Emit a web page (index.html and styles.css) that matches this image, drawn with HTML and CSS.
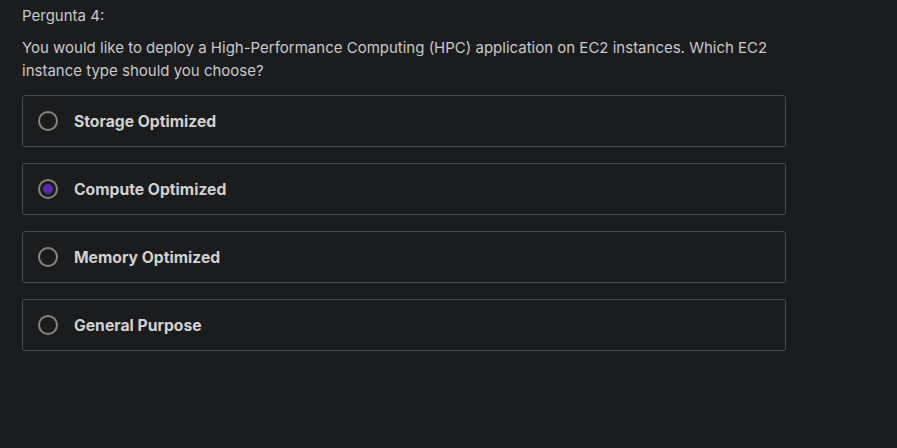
FILE: index.html
```html
<!DOCTYPE html>
<html>
<head>
<meta charset="utf-8">
<link rel="stylesheet" href="styles.css">
</head>
<body>
<div class="quiz">
  <div class="title">Pergunta 4:</div>
  <p class="question">You would like to deploy a High-Performance Computing (HPC) application on EC2 instances. Which EC2 instance type should you choose?</p>
  <div class="options">
    <label class="option"><span class="radio"></span><span class="label">Storage Optimized</span></label>
    <label class="option"><span class="radio checked"></span><span class="label">Compute Optimized</span></label>
    <label class="option"><span class="radio"></span><span class="label">Memory Optimized</span></label>
    <label class="option"><span class="radio"></span><span class="label">General Purpose</span></label>
  </div>
</div>
</body>
</html>
```
FILE: styles.css
```css
html, body {
  margin: 0;
  background: #1b1c1e;
  height: 100%;
}
body {
  font-family: Inter, "Noto Sans", sans-serif;
  color: #c8c9ca;
}
.quiz {
  width: 764px;
  padding: 5px 0 0 22px;
}
.title {
  font-size: 15px;
  line-height: 22px;
}
.question {
  margin: 9px 0 0;
  font-size: 15px;
  line-height: 23px;
}
.options {
  margin-top: 13px;
  display: flex;
  flex-direction: column;
  gap: 16px;
}
.option {
  display: flex;
  align-items: center;
  height: 50px;
  border: 1px solid #4a4c4f;
  border-radius: 3px;
  padding-left: 15px;
}
.radio {
  box-sizing: border-box;
  width: 20px;
  height: 20px;
  border: 2px solid #8a847b;
  border-radius: 50%;
  position: relative;
}
.radio.checked::after {
  content: "";
  position: absolute;
  left: 3px;
  top: 3px;
  width: 10px;
  height: 10px;
  border-radius: 50%;
  background: #5a2bb0;
}
.label {
  margin-left: 16px;
  font-weight: 700;
  font-size: 15.7px;
  color: #d0d1d2;
}
```
